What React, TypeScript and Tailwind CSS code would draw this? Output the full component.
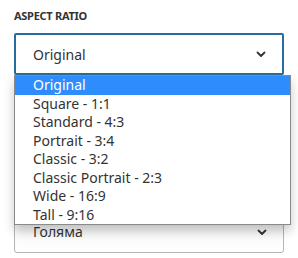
const OPTIONS = [
  "Original",
  "Square - 1:1",
  "Standard - 4:3",
  "Portrait - 3:4",
  "Classic - 3:2",
  "Classic Portrait - 2:3",
  "Wide - 16:9",
  "Tall - 9:16",
];

function Chevron() {
  return (
    <svg width="10" height="7" viewBox="0 0 10 7" className="text-[#333]">
      <path d="M1.5 1.5 5 5l3.5-3.5" fill="none" stroke="currentColor" strokeWidth="1.8" strokeLinecap="round" strokeLinejoin="round" />
    </svg>
  );
}

export default function App() {
  return (
    <div className="relative h-[258px] w-[298px] overflow-hidden bg-white px-[14px] pt-[9px] font-['Noto_Sans',sans-serif] text-[#333]">
      <div className="text-[11px] font-bold leading-[14px] tracking-tight text-[#333]">ASPECT RATIO</div>

      {/* open select */}
      <div className="mt-[10px] flex h-[42px] items-center justify-between rounded-[2px] border-2 border-[#2a6d9c] bg-white pl-[17px] pr-[16px] text-[14px]">
        <span>Original</span>
        <Chevron />
      </div>

      <div className="mt-[137px] flex h-[41px] items-center justify-between rounded-[3px] border border-[#b5b5b5] bg-gradient-to-b from-[#f4f4f4] to-white pl-[18px] pr-[16px] text-[14px]">
        <span className="-mt-[2px]">Голяма</span>
        <Chevron />
      </div>

      {/* dropdown list */}
      <ul className="absolute left-[14px] top-[75px] w-[277px] border border-[#8a8a8a] bg-white py-0 text-[14px] leading-[18.5px] shadow-[0_6px_10px_rgba(0,0,0,0.22)]">
        {OPTIONS.map((o, i) => (
          <li
            key={o}
            className={i === 0 ? "bg-[#2f8cfc] pl-[18px] text-white" : "pl-[18px] text-[#333]"}
          >
            {o}
          </li>
        ))}
      </ul>
    </div>
  );
}
